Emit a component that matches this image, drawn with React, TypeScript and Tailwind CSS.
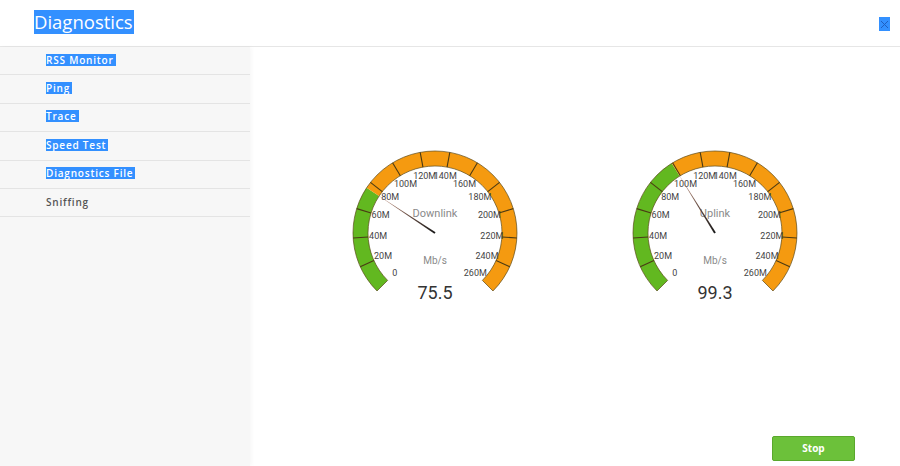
import React from "react";

const MENU = [
  { label: "RSS Monitor", selected: true },
  { label: "Ping", selected: true },
  { label: "Trace", selected: true },
  { label: "Speed Test", selected: true },
  { label: "Diagnostics File", selected: true },
  { label: "Sniffing", selected: false },
];

const CX = 90;
const CY = 85;
const R_OUT = 82;
const R_IN = 67;
const MAX = 260;
const STEPS = 13;

function polar(r: number, deg: number) {
  const a = (deg * Math.PI) / 180;
  return { x: CX + r * Math.cos(a), y: CY - r * Math.sin(a) };
}

// angle in degrees (math, y-up) for a speed value
function angleFor(v: number) {
  return 225 - (v / MAX) * 270;
}

function bandPath(from: number, to: number) {
  const a0 = angleFor(from);
  const a1 = angleFor(to);
  const large = a0 - a1 > 180 ? 1 : 0;
  const o0 = polar(R_OUT, a0);
  const o1 = polar(R_OUT, a1);
  const i1 = polar(R_IN, a1);
  const i0 = polar(R_IN, a0);
  return `M${o0.x} ${o0.y} A${R_OUT} ${R_OUT} 0 ${large} 1 ${o1.x} ${o1.y} L${i1.x} ${i1.y} A${R_IN} ${R_IN} 0 ${large} 0 ${i0.x} ${i0.y} Z`;
}

function Gauge({ title, value, id }: { title: string; value: number; id: string }) {
  const needleAngle = angleFor(value);
  const tip = polar(72, needleAngle);
  const perp = ((needleAngle + 90) * Math.PI) / 180;
  const bx = 1 * Math.cos(perp);
  const by = -1 * Math.sin(perp);
  return (
    <svg width="180" height="160" viewBox="0 0 180 160" className="shrink-0">
      <defs>
        <linearGradient id={id} gradientUnits="userSpaceOnUse" x1={CX} y1={CY} x2={tip.x} y2={tip.y}>
          <stop offset="0" stopColor="#1a1a1a" />
          <stop offset="1" stopColor="#c98f78" />
        </linearGradient>
      </defs>
      <path d={bandPath(0, value)} fill="#62b820" />
      <path d={bandPath(value, MAX)} fill="#f59a10" />
      <path d={bandPath(0, MAX)} fill="none" stroke="#5b4a1c" strokeWidth="0.7" />
      {Array.from({ length: STEPS - 1 }, (_, i) => {
        const a = angleFor((i + 1) * 20);
        const p0 = polar(R_IN, a);
        const p1 = polar(R_OUT, a);
        return <line key={i} x1={p0.x} y1={p0.y} x2={p1.x} y2={p1.y} stroke="#4a3a14" strokeWidth="1.1" />;
      })}
      {Array.from({ length: STEPS + 1 }, (_, i) => {
        const p = polar(57, angleFor(i * 20));
        return (
          <text
            key={i}
            x={p.x}
            y={p.y}
            textAnchor="middle"
            dominantBaseline="middle"
            fontSize="9"
            fill="#444"
            fontFamily="Roboto, sans-serif"
          >
            {i === 0 ? "0" : `${i * 20}M`}
          </text>
        );
      })}
      <text x={CX} y={69} textAnchor="middle" fontSize="11" fill="#8a8a8a" fontFamily="Roboto, sans-serif">
        {title}
      </text>
      <text x={CX} y={116} textAnchor="middle" fontSize="10" fill="#8a8a8a" fontFamily="Roboto, sans-serif">
        Mb/s
      </text>
      <polygon
        points={`${CX + bx},${CY + by} ${tip.x},${tip.y} ${CX - bx},${CY - by}`}
        fill={`url(#${id})`}
      />
      <text x={CX} y={151} textAnchor="middle" fontSize="18" fill="#333" fontFamily="Roboto, sans-serif">
        {value.toFixed(1)}
      </text>
    </svg>
  );
}

export default function App() {
  return (
    <div className="flex h-[466px] w-[900px] flex-col overflow-hidden bg-white font-['Open_Sans',sans-serif]">
      <header className="flex h-[47px] shrink-0 items-start justify-between border-b border-[#e6e6e6] pl-[34px] pr-[10px]">
        <h1 className="mt-[10px] bg-[#3390ff] pr-[1px] text-[18.5px] leading-[24px] text-white">Diagnostics</h1>
        <span className="mt-[17px] flex h-[14px] w-[11px] items-center justify-center bg-[#3390ff]">
          <svg width="9" height="9" viewBox="0 0 9 9">
            <path d="M1 1 L8 8 M8 1 L1 8" stroke="#1f5fc0" strokeWidth="1" />
          </svg>
        </span>
      </header>
      <div className="flex min-h-0 flex-1">
        <aside className="w-[250px] shrink-0 bg-[#f7f7f7] shadow-[2px_0_4px_rgba(0,0,0,0.03)]">
          <ul>
            {MENU.map((m) => (
              <li
                key={m.label}
                className="flex h-[28.4px] items-center border-b border-[#e4e4e4] pb-[2px] pl-[46px] text-[10px] font-semibold tracking-[0.8px]"
              >
                <span className={m.selected ? "bg-[#3390ff] pr-[2px] leading-[12px] text-white" : "leading-[12px] text-[#555]"}>
                  {m.label}
                </span>
              </li>
            ))}
          </ul>
        </aside>
        <main className="flex flex-1 flex-col">
          <div className="mt-[101px] flex justify-center gap-[100px]">
            <Gauge title="Downlink" value={75.5} id="g1" />
            <Gauge title="Uplink" value={99.3} id="g2" />
          </div>
          <button className="mt-auto mb-[5px] mr-[45px] h-[25px] w-[83px] self-end rounded-[2px] border border-[#5aa82c] bg-[#6cc13a] text-[10px] font-bold text-white">
            Stop
          </button>
        </main>
      </div>
    </div>
  );
}
